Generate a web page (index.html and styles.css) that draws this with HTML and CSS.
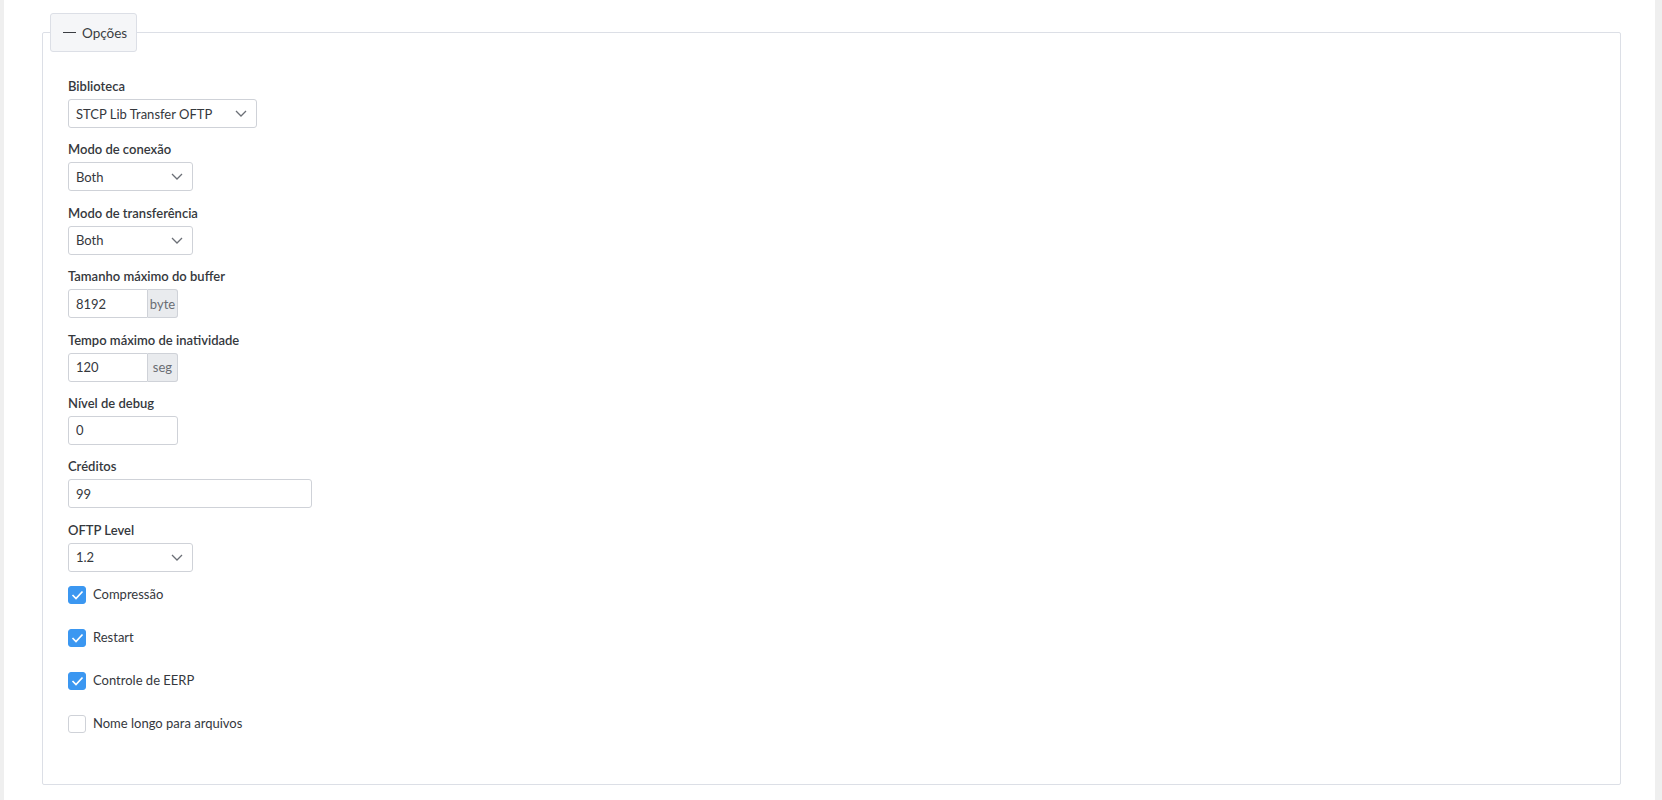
FILE: index.html
```html
<html>
<head>
<title>Opções</title>
<link rel="stylesheet" href="styles.css">
</head>
<body>
<div class="page">
  <fieldset class="options">
    <legend class="toggle"><span class="dash"></span>Opções</legend>
    <div class="options-body">

      <div class="field">
        <label class="field-label">Biblioteca</label>
        <div class="select w-lib">
          <span>STCP Lib Transfer OFTP</span>
          <svg class="chev" width="12" height="7" viewBox="0 0 12 7"><path d="M1 1l5 5 5-5" fill="none" stroke="#6b6f76" stroke-width="1.3"/></svg>
        </div>
      </div>

      <div class="field">
        <label class="field-label">Modo de conexão</label>
        <div class="select w-mid">
          <span>Both</span>
          <svg class="chev" width="12" height="7" viewBox="0 0 12 7"><path d="M1 1l5 5 5-5" fill="none" stroke="#6b6f76" stroke-width="1.3"/></svg>
        </div>
      </div>

      <div class="field">
        <label class="field-label">Modo de transferência</label>
        <div class="select w-mid">
          <span>Both</span>
          <svg class="chev" width="12" height="7" viewBox="0 0 12 7"><path d="M1 1l5 5 5-5" fill="none" stroke="#6b6f76" stroke-width="1.3"/></svg>
        </div>
      </div>

      <div class="field">
        <label class="field-label">Tamanho máximo do buffer</label>
        <div class="input-group">
          <input class="input w-num" type="text" value="8192">
          <span class="addon">byte</span>
        </div>
      </div>

      <div class="field">
        <label class="field-label">Tempo máximo de inatividade</label>
        <div class="input-group">
          <input class="input w-num" type="text" value="120">
          <span class="addon">seg</span>
        </div>
      </div>

      <div class="field">
        <label class="field-label">Nível de debug</label>
        <input class="input w-small" type="text" value="0">
      </div>

      <div class="field">
        <label class="field-label">Créditos</label>
        <input class="input w-wide" type="text" value="99">
      </div>

      <div class="field last">
        <label class="field-label">OFTP Level</label>
        <div class="select w-mid">
          <span>1.2</span>
          <svg class="chev" width="12" height="7" viewBox="0 0 12 7"><path d="M1 1l5 5 5-5" fill="none" stroke="#6b6f76" stroke-width="1.3"/></svg>
        </div>
      </div>

      <div class="check">
        <span class="box on"><svg width="13" height="10" viewBox="0 0 13 10"><path d="M1.5 5l3.5 3.5 6.5-7" fill="none" stroke="#fff" stroke-width="1.7"/></svg></span>
        <span class="check-label">Compressão</span>
      </div>
      <div class="check">
        <span class="box on"><svg width="13" height="10" viewBox="0 0 13 10"><path d="M1.5 5l3.5 3.5 6.5-7" fill="none" stroke="#fff" stroke-width="1.7"/></svg></span>
        <span class="check-label">Restart</span>
      </div>
      <div class="check">
        <span class="box on"><svg width="13" height="10" viewBox="0 0 13 10"><path d="M1.5 5l3.5 3.5 6.5-7" fill="none" stroke="#fff" stroke-width="1.7"/></svg></span>
        <span class="check-label">Controle de EERP</span>
      </div>
      <div class="check">
        <span class="box"></span>
        <span class="check-label">Nome longo para arquivos</span>
      </div>

    </div>
  </fieldset>
</div>
</body>
</html>
```

FILE: styles.css
```css
body {
  margin: 0;
  background-color: #efefef;
  font-family: Lato, "Liberation Sans", sans-serif;
  font-size: 13px;
  color: #35383d;
}
.page {
  background-color: #ffffff;
  margin: 0 7px 0 4px;
  height: 800px;
  padding-top: 13px;
  box-sizing: border-box;
}
.options {
  margin: 0 34px 0 38px;
  padding: 0;
  border: 1px solid #dcdfe6;
  border-radius: 2px;
  min-width: 0;
}
.toggle {
  margin-left: 7px;
  padding: 0 0 0 12px;
  width: 87px;
  height: 39px;
  box-sizing: border-box;
  background-color: #f5f6f8;
  border: 1px solid #dcdfe6;
  border-radius: 3px;
  font-size: 13.5px;
  color: #3a3d42;
  display: flex;
  align-items: center;
  white-space: nowrap;
}
.dash {
  display: inline-block;
  flex-shrink: 0;
  width: 13px;
  height: 1px;
  background-color: #3a3d42;
  margin-right: 6px;
}
.options-body {
  padding: 24px 25px 26px 25px;
}
.field {
  margin-bottom: 11.4px;
}
.field.last {
  margin-bottom: 14px;
}
.field-label {
  display: block;
  font-weight: 600;
  line-height: 20px;
  margin-bottom: 3px;
  color: #35383d;
}
.select {
  height: 29px;
  box-sizing: border-box;
  border: 1px solid #cfd2d8;
  border-radius: 3px;
  padding: 0 9px 0 7px;
  display: flex;
  align-items: center;
  justify-content: space-between;
  background-color: #ffffff;
}
.w-lib { width: 189px; }
.w-mid { width: 125px; }
.w-num { width: 80px; }
.w-small { width: 110px; }
.w-wide { width: 244px; }
.input {
  height: 29px;
  box-sizing: border-box;
  border: 1px solid #cfd2d8;
  border-radius: 3px;
  padding: 0 7px;
  font-family: Lato, "Liberation Sans", sans-serif;
  font-size: 13px;
  color: #35383d;
  outline: none;
  display: block;
}
.input-group {
  display: flex;
}
.input-group .input {
  border-radius: 3px 0 0 3px;
}
.addon {
  width: 30px;
  height: 29px;
  box-sizing: border-box;
  border: 1px solid #cfd2d8;
  border-left: none;
  border-radius: 0 3px 3px 0;
  background-color: #e9ebee;
  color: #6a6d73;
  display: flex;
  align-items: center;
  justify-content: center;
}
.check {
  display: flex;
  align-items: flex-start;
  gap: 7px;
  margin-bottom: 25px;
}
.box {
  width: 18px;
  height: 18px;
  box-sizing: border-box;
  border: 1px solid #cfd2d8;
  border-radius: 3px;
  background-color: #ffffff;
  display: flex;
  align-items: center;
  justify-content: center;
}
.box.on {
  background-color: #3b97f1;
  border-color: #3b97f1;
}
.check-label {
  line-height: 16px;
  color: #35383d;
}
```
